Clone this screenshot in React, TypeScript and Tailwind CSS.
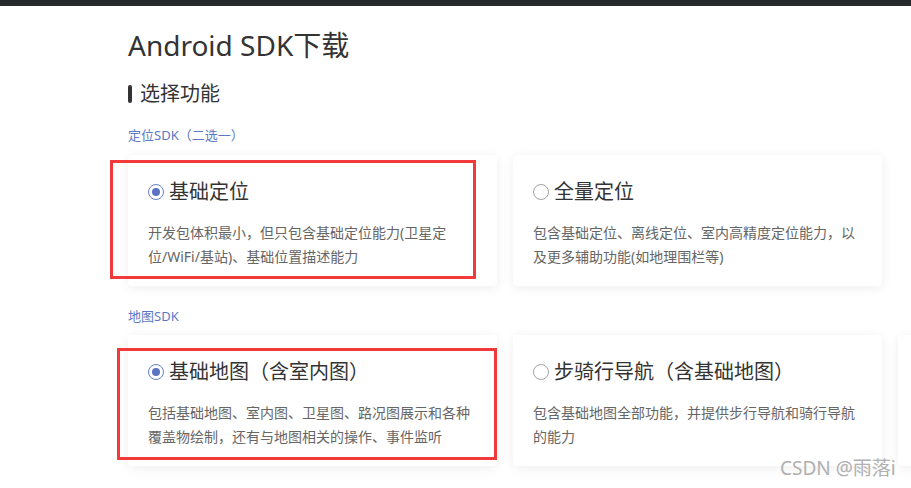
import React from "react";

const FONT = { fontFamily: '"Noto Sans", "Noto Sans CJK SC", sans-serif' };

function Radio({ checked }: { checked: boolean }) {
  return checked ? (
    <span className="flex h-[16px] w-[16px] shrink-0 items-center justify-center rounded-full border border-[#6680cc] bg-white">
      <span className="h-[8px] w-[8px] rounded-full bg-[#5a74c4]" />
    </span>
  ) : (
    <span className="h-[16px] w-[16px] shrink-0 rounded-full border border-[#a3a3a3] bg-white" />
  );
}

function Card({ title, desc, checked }: { title: string; desc: string; checked: boolean }) {
  return (
    <div className="h-[131px] w-[369px] shrink-0 rounded-[4px] bg-white px-[20px] pt-[22px] shadow-[0_2px_12px_rgba(0,0,0,0.07)]">
      <div className="flex h-[30px] items-center gap-[5px]">
        <Radio checked={checked} />
        <span className="text-[20px] leading-[30px] text-[#333]">{title}</span>
      </div>
      <p className="mt-[14px] text-[14px] leading-[24px] text-[#666]">{desc}</p>
    </div>
  );
}

export default function App() {
  return (
    <div className="relative h-[488px] w-[911px] overflow-hidden bg-white" style={FONT}>
      <div className="h-[6px] bg-[#26292b]" />
      <div className="pl-[128px]">
        <h1 className="mt-[23px] text-[28px] leading-[32px] font-normal text-[#333]">Android SDK下载</h1>
        <div className="mt-[19px] flex h-[28px] items-center gap-[8px]">
          <span className="h-[18px] w-[4px] rounded-[2px] bg-[#333]" />
          <span className="text-[20px] leading-[28px] text-[#333]">选择功能</span>
        </div>
        <div className="mt-[18px] text-[13px] leading-[18px] text-[#5b78c4]">定位SDK（二选一）</div>
        <div className="mt-[11px] flex gap-[16px]">
          <Card
            checked
            title="基础定位"
            desc="开发包体积最小，但只包含基础定位能力(卫星定位/WiFi/基站)、基础位置描述能力"
          />
          <Card
            checked={false}
            title="全量定位"
            desc="包含基础定位、离线定位、室内高精度定位能力，以及更多辅助功能(如地理围栏等)"
          />
        </div>
        <div className="mt-[21px] text-[13px] leading-[18px] text-[#5b78c4]">地图SDK</div>
        <div className="mt-[10px] flex gap-[16px]">
          <Card
            checked
            title="基础地图（含室内图）"
            desc="包括基础地图、室内图、卫星图、路况图展示和各种覆盖物绘制，还有与地图相关的操作、事件监听"
          />
          <Card
            checked={false}
            title="步骑行导航（含基础地图）"
            desc="包含基础地图全部功能，并提供步行导航和骑行导航的能力"
          />
          <Card checked={false} title="" desc="" />
        </div>
      </div>
      <div className="absolute left-[110px] top-[160px] h-[119px] w-[366px] border-[3px] border-[#f23a3a]" />
      <div className="absolute left-[117px] top-[348px] h-[112px] w-[380px] border-[3px] border-[#f23a3a]" />
      <div className="absolute left-[780px] top-[456px] text-[19px] leading-[24px] text-[#b0b0b0]">CSDN @雨落i</div>
    </div>
  );
}
